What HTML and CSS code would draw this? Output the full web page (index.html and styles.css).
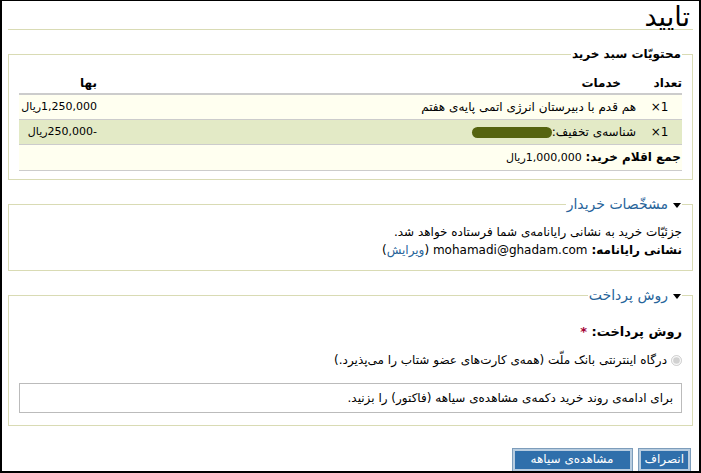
FILE: index.html
```html
<!DOCTYPE html>
<html lang="fa" dir="rtl">
<head>
    <meta charset="UTF-8">
    <meta name="viewport" content="width=device-width, initial-scale=1.0">
    <title>تایید</title>
    <link rel="stylesheet" href="styles.css">
</head>
<body>
    <div class="page">
        <h1 class="page-title">تایید</h1>

        <fieldset class="pane">
            <legend class="pane-title">محتویّات سبد خرید</legend>
            <table class="cart-table">
                <thead>
                    <tr>
                        <th class="qty">تعداد</th>
                        <th class="product">خدمات</th>
                        <th class="price">بها</th>
                    </tr>
                </thead>
                <tbody>
                    <tr class="odd">
                        <td class="qty">1×</td>
                        <td class="product">هم قدم با دبیرستان انرژی اتمی پایه‌ی هفتم</td>
                        <td class="price">1,250,000ریال</td>
                    </tr>
                    <tr class="even">
                        <td class="qty">1×</td>
                        <td class="product">شناسه‌ی تخفیف:<span class="redacted"></span></td>
                        <td class="price">-250,000ریال</td>
                    </tr>
                    <tr class="odd">
                        <td class="subtotal" colspan="3"><strong>جمع اقلام خرید:</strong> <span class="amount">1,000,000ریال</span></td>
                    </tr>
                </tbody>
            </table>
        </fieldset>

        <fieldset class="pane collapsible">
            <legend class="pane-title"><span class="arrow"></span><a href="#">مشخّصات خریدار</a></legend>
            <div class="customer">
                <div class="line">جزئیّات خرید به نشانی رایانامه‌ی شما فرستاده خواهد شد.</div>
                <div class="line"><strong>نشانی رایانامه:</strong> mohamadi@ghadam.com (<a href="#">ویرایش</a>)</div>
            </div>
        </fieldset>

        <fieldset class="pane collapsible">
            <legend class="pane-title"><span class="arrow"></span><a href="#">روش پرداخت</a></legend>
            <div class="form-label">روش پرداخت: <span class="required">*</span></div>
            <label class="option">
                <input type="radio" name="payment" checked disabled>
                درگاه اینترنتی بانک ملّت (همه‌ی کارت‌های عضو شتاب را می‌پذیرد.)
            </label>
            <div class="payment-note">برای ادامه‌ی روند خرید دکمه‌ی مشاهده‌ی سیاهه (فاکتور) را بزنید.</div>
        </fieldset>

        <div class="form-actions">
            <button class="form-button">انصراف</button>
            <button class="form-button wide">مشاهده‌ی سیاهه</button>
        </div>
    </div>
</body>
</html>
```

FILE: styles.css
```css
html, body {
    margin: 0;
    padding: 0;
    background-color: #fff;
}

body {
    font-family: "DejaVu Sans", Tahoma, sans-serif;
    font-size: 12px;
    color: #000;
    direction: rtl;
}

a {
    color: #27649a;
    text-decoration: none;
}

.page {
    height: 473px;
    box-sizing: border-box;
    border: 2px solid #000;
    border-top-width: 1px;
    padding: 0 6px;
    overflow: hidden;
}

.page-title {
    margin: 0 0 17px;
    padding: 4px 3px 0;
    font-size: 27px;
    font-weight: normal;
    line-height: 24px;
    border-bottom: 1px solid #d9dbb4;
}

.pane {
    margin: 0 0 17px;
    padding: 10px 10px 8px;
    border: 1px solid #d9dbb4;
}

.pane-title {
    padding: 0 1px;
    font-weight: bold;
    line-height: 14px;
}

.collapsible .pane-title {
    font-weight: normal;
    font-size: 14px;
}

.arrow {
    display: inline-block;
    width: 0;
    height: 0;
    border-left: 4px solid transparent;
    border-right: 4px solid transparent;
    border-top: 5px solid #000;
    margin-left: 5px;
    vertical-align: middle;
}

.cart-table {
    width: 100%;
    border-collapse: collapse;
    table-layout: fixed;
}

.cart-table th {
    padding: 6px 0 3px;
    text-align: right;
    font-weight: bold;
    border-bottom: 2px solid #ccc;
    line-height: 13px;
}

.cart-table td {
    padding: 5px 0 5px;
    line-height: 14px;
    border-bottom: 1px solid #ccc;
}

.cart-table .odd {
    background-color: #fffff0;
}

.cart-table .even {
    background-color: #e3eac6;
}

.cart-table .qty {
    width: 45px;
    text-align: center;
}

.cart-table th.qty {
    text-align: right;
}

.cart-table th.product {
    padding-right: 16px;
}

.cart-table .price {
    width: 78px;
    text-align: right;
    padding-right: 4px;
}

.cart-table td.price,
.amount {
    font-size: 11px;
}

.cart-table td.product {
    padding-right: 1px;
}

.cart-table td.subtotal {
    text-align: right;
    padding-right: 1px;
}

.redacted {
    display: inline-block;
    width: 80px;
    height: 11px;
    border-radius: 6px;
    background-color: #556410;
    vertical-align: middle;
}

.customer {
    padding-top: 2px;
    padding-bottom: 3px;
}

.line {
    line-height: 18px;
}

.form-label {
    font-weight: bold;
    font-size: 13px;
    line-height: 15px;
    margin: 12px 0 14px;
}

.required {
    color: #a30034;
}

.option {
    display: flex;
    align-items: center;
    gap: 4px;
    margin-bottom: 15px;
    line-height: 15px;
}

.option input {
    margin: 0;
    width: 11px;
    height: 11px;
}

.payment-note {
    border: 1px solid #bbb;
    padding: 7px 8px;
    line-height: 14px;
    margin-bottom: 4px;
}

.form-actions {
    display: flex;
    gap: 7px;
    padding-right: 3px;
    padding-top: 6px;
}

.form-button {
    font-family: "DejaVu Sans", Tahoma, sans-serif;
    font-size: 12px;
    color: #fff;
    background-color: #2f6fab;
    border: 2px solid #b8cde0;
    outline: 1px solid #7d9dbb;
    padding: 1px 4px 2px;
    line-height: 15px;
    cursor: pointer;
}

.form-button.wide {
    padding-left: 16px;
    padding-right: 16px;
}
```
